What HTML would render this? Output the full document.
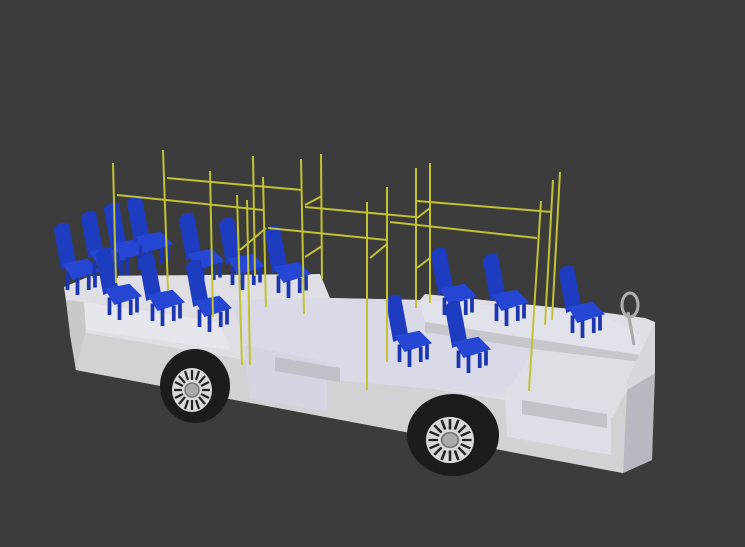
<!DOCTYPE html>
<html><head><meta charset="utf-8"><style>
html,body{margin:0;padding:0;background:#3c3c3c;}
svg{display:block}
</style></head><body>
<svg width="745" height="547" viewBox="0 0 745 547" xmlns="http://www.w3.org/2000/svg">
<rect width="745" height="547" fill="#3c3c3c"/>
<defs>
<g id="seat">
<path d="M-1,3 q5,-7 12,-4 l6,32 l-12,5 z" fill="#1e3cc0"/>
<path d="M6,31 l20,-4 l10,10 l-22,7 z" fill="#2646d4"/>
<path d="M10,38 l0,14 M32,38 l0,12 M18,42 l0,14 M27,40 l0,12" stroke="#1c36b0" stroke-width="3"/>
</g>
<g id="hub">
<ellipse cx="0" cy="0" rx="20" ry="22" fill="#d8d8d8"/>
<g stroke="#222" stroke-width="2.2">
<path d="M0,-20 v10 M0,10 v10 M-18,0 h8 M10,0 h8 M-13,-14 l6,7 M7,7 l6,7 M13,-14 l-6,7 M-7,7 l-6,7 M-7,-19 l3,9 M4,10 l3,9 M7,-19 l-3,9 M-4,10 l-3,9 M-17,-8 l8,4 M9,4 l8,4 M17,-8 l-8,4 M-9,4 l-8,4"/>
</g>
<ellipse cx="0" cy="0" rx="7" ry="7" fill="#aaa" stroke="#777" stroke-width="1.5"/>
</g>
</defs>
<polygon points="64,287 90,276 320,274 330,298 420,300 425,294 600,312 645,318 655,322 652,460 623,473 76,370" fill="#dedee4"/>
<polygon points="70,330 245,360 505,400 612,418 627,390 623,473 76,370" fill="#d2d2d5"/>
<polygon points="66,300 84,302 86,330 76,370 70,335" fill="#c9c9cc"/>
<polygon points="84,302 220,322 230,350 86,330" fill="#e6e6ec"/>
<polygon points="230,300 330,298 420,300 540,340 505,395 330,380 245,345" fill="#d9d9e8"/>
<polygon points="244,345 327,362 327,412 250,398" fill="#d4d4e2"/>
<polygon points="275,357 340,368 340,382 275,371" fill="#c0c0c8"/>
<polygon points="420,300 600,314 640,335 645,360 540,340 425,322" fill="#e2e2ea"/>
<polygon points="425,322 540,340 640,355 642,362 540,350 425,332" fill="#c6c6cc"/>
<polygon points="505,387 611,405 611,455 507,437" fill="#dedee6"/>
<polygon points="522,400 607,414 607,428 522,414" fill="#c2c2c8"/>
<polygon points="627,390 655,373 652,460 623,473" fill="#b8b8c0"/>
<polygon points="627,380 655,322 655,373 627,390" fill="#d6d6dc"/>
<ellipse cx="195" cy="386" rx="35" ry="37" fill="#1c1c1c"/>
<use href="#hub" x="192" y="390"/>
<ellipse cx="453" cy="435" rx="46" ry="41" fill="#1c1c1c"/>
<g transform="translate(450,440) scale(1.2,1.05)"><use href="#hub"/></g>
<ellipse cx="630" cy="305" rx="8" ry="12" fill="none" stroke="#b0b0b0" stroke-width="3"/>
<line x1="628" y1="312" x2="634" y2="345" stroke="#aaa" stroke-width="3"/>
<g>
<use href="#seat" transform="translate(55,225) scale(1.25)"/><use href="#seat" transform="translate(82,213) scale(1.25)"/><use href="#seat" transform="translate(105,205) scale(1.25)"/>
<use href="#seat" transform="translate(128,198) scale(1.25)"/><use href="#seat" transform="translate(180,215) scale(1.25)"/><use href="#seat" transform="translate(220,220) scale(1.25)"/>
<use href="#seat" transform="translate(266,228) scale(1.25)"/><use href="#seat" transform="translate(97,250) scale(1.25)"/><use href="#seat" transform="translate(140,256) scale(1.25)"/>
<use href="#seat" transform="translate(187,262) scale(1.25)"/><use href="#seat" transform="translate(432,250) scale(1.25)"/><use href="#seat" transform="translate(484,256) scale(1.25)"/>
<use href="#seat" transform="translate(560,268) scale(1.25)"/><use href="#seat" transform="translate(387,297) scale(1.25)"/><use href="#seat" transform="translate(446,303) scale(1.25)"/>
</g>
<g stroke="#c2c234" stroke-width="2" fill="none">
<path d="M113,163 l3,120 M163,150 l5,140 M210,171 l3,146 M253,156 l2,120 M263,177 l3,130 M301,159 l3,155 M321,154 l1,125 M367,202 v188 M387,187 v175 M416,168 v140 M430,163 v140 M541,201 l-12,190 M553,180 l-8,145 M560,172 l-8,148 M237,195 l5,170 M247,200 l3,165"/>
<path d="M117,195 L263,210 M167,178 L302,190 M305,207 L415,217 M268,228 L387,240 M390,222 L537,238 M417,201 L552,212 M305,205 L322,196 M240,250 L266,228 M305,257 L322,246 M370,258 L387,244 M417,218 L430,208 M417,268 L430,258"/>
</g>
</svg>
</body></html>
